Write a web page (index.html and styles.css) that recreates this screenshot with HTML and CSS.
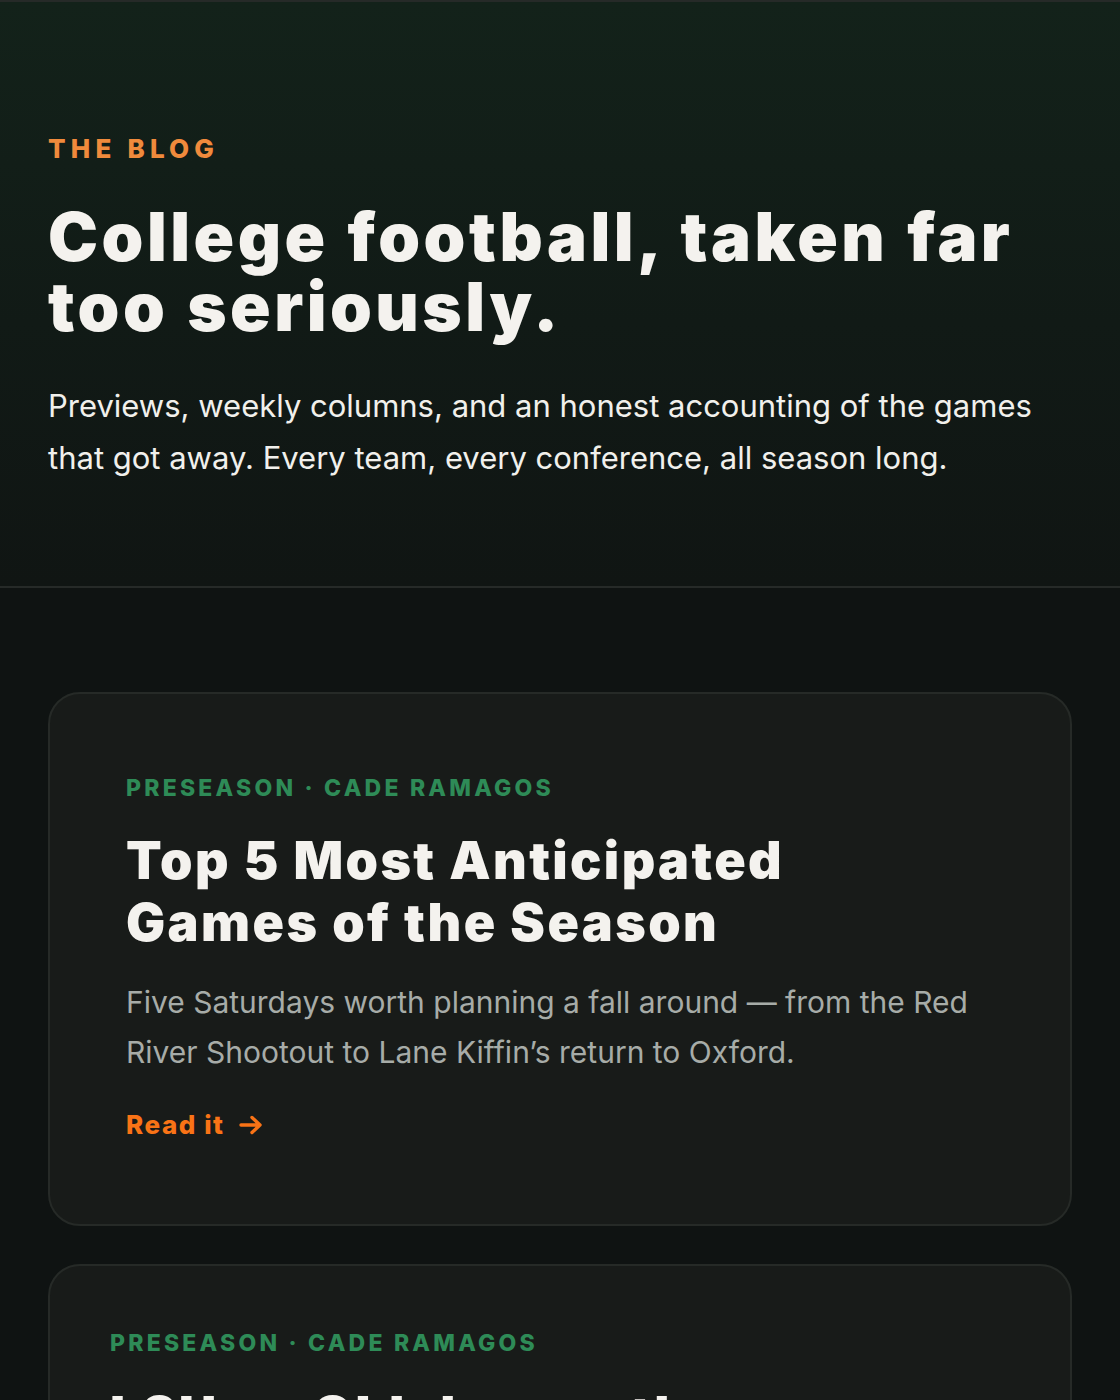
FILE: index.html
```html
<!DOCTYPE html>
<html lang="en">
<head>
<meta charset="utf-8">
<title>The Blog</title>
<link rel="stylesheet" href="styles.css">
</head>
<body>
<header class="hero">
  <div class="hero-inner">
    <p class="eyebrow">The Blog</p>
    <h1 class="hero-title">College football, taken far too seriously.</h1>
    <p class="hero-lede">Previews, weekly columns, and an honest accounting of the games that got away. Every team, every conference, all season long.</p>
  </div>
</header>
<main class="posts">
  <article class="card card-featured">
    <p class="meta">Preseason · Cade Ramagos</p>
    <h2 class="card-title">Top 5 Most Anticipated Games of the Season</h2>
    <p class="card-desc">Five Saturdays worth planning a fall around — from the Red River Shootout to Lane Kiffin’s return to Oxford.</p>
    <a class="read" href="#">Read it <svg class="arrow" width="24" height="20" viewBox="0 0 24 20" aria-hidden="true"><path d="M2 10H21M13 2.5L21 10L13 17.5" fill="none" stroke="currentColor" stroke-width="3.4" stroke-linecap="round" stroke-linejoin="round"/></svg></a>
  </article>
  <article class="card">
    <p class="meta">Preseason · Cade Ramagos</p>
    <h2 class="card-title">LSU vs Oklahoma: the Showdown in the Bayou</h2>
    <p class="card-desc">A look at the early-season matchup that will shape the playoff picture.</p>
    <a class="read" href="#">Read it <svg class="arrow" width="24" height="20" viewBox="0 0 24 20" aria-hidden="true"><path d="M2 10H21M13 2.5L21 10L13 17.5" fill="none" stroke="currentColor" stroke-width="3.4" stroke-linecap="round" stroke-linejoin="round"/></svg></a>
  </article>
</main>
</body>
</html>
```
FILE: styles.css
```css
* { box-sizing: border-box; }
html, body { margin: 0; padding: 0; }
body {
  background: #0f1312;
  color: #f3f2ee;
  font-family: Inter, "Noto Sans", sans-serif;
  border-top: 2px solid #262a28;
}
.hero {
  background: linear-gradient(180deg, #13221a 0%, #111a16 55%, #101513 100%);
  border-bottom: 2px solid #262a28;
  padding: 131px 48px 102px;
}
.eyebrow {
  margin: 0;
  color: #f08a3c;
  font-weight: 800;
  font-size: 26px;
  letter-spacing: 0.2em;
  text-transform: uppercase;
  line-height: 32px;
}
.hero-title {
  margin: 37px 0 0;
  font-weight: 900;
  font-size: 67px;
  line-height: 70px;
  letter-spacing: 0.052em;
  word-spacing: 0.03em;
  color: #f4f2ee;
}
.hero-lede {
  margin: 38px 0 0;
  font-size: 31px;
  line-height: 52px;
  color: #f1f0ec;
}
.posts {
  padding: 104px 48px 0;
  display: flex;
  flex-direction: column;
  gap: 38px;
}
.card {
  background: #181b19;
  border: 2px solid #262a27;
  border-radius: 32px;
  padding: 63px 60px 80px;
}
.card-featured {
  padding: 80px 76px 81px;
}
.meta {
  margin: 0;
  color: #2e8b57;
  font-weight: 800;
  font-size: 23px;
  letter-spacing: 0.14em;
  text-transform: uppercase;
  line-height: 28px;
}
.card-title {
  margin: 28px 0 0;
  font-weight: 900;
  font-size: 52px;
  line-height: 62px;
  letter-spacing: 0.046em;
  color: #f4f2ee;
  max-width: 720px;
}
.card-desc {
  margin: 23px 0 0;
  font-size: 30px;
  line-height: 50px;
  color: #a7aca8;
}
.read {
  display: inline-flex;
  align-items: center;
  gap: 14px;
  margin-top: 30px;
  color: #f97316;
  font-weight: 800;
  font-size: 26px;
  letter-spacing: 0.06em;
  line-height: 36px;
  text-decoration: none;
}
.arrow { display: block; }
```
